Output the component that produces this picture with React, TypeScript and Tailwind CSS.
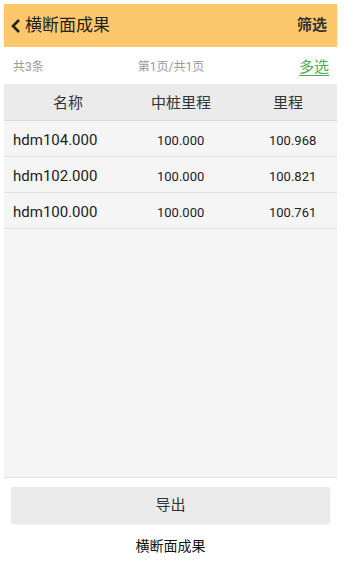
import React from 'react';

const rows = [
  { name: 'hdm104.000', center: '100.000', mileage: '100.968' },
  { name: 'hdm102.000', center: '100.000', mileage: '100.821' },
  { name: 'hdm100.000', center: '100.000', mileage: '100.761' }
];

const FONT = { fontFamily: 'Roboto, "Noto Sans CJK SC", sans-serif' };

export default function App() {
  return (
    <div className="h-[569px] w-[349px] overflow-hidden bg-white" style={FONT}>
      <div className="ml-[4px] mt-[4px] flex w-[333px] flex-col">
        {/* 顶部标题栏 */}
        <div className="flex h-[43px] items-center justify-between bg-[#fdc86c] pl-[6px] pr-[10px] shadow-[0_1px_2px_rgba(0,0,0,0.12)]">
          <div className="flex items-center gap-[3px]">
            <svg width="12" height="16" viewBox="0 0 12 16">
              <path d="M9 2 L3 8 L9 14" fill="none" stroke="#222" strokeWidth="2.6" />
            </svg>
            <span className="text-[17px] text-[#222]">横断面成果</span>
          </div>
          <span className="text-[15px] font-bold text-[#333]">筛选</span>
        </div>

        {/* 分页信息 */}
        <div className="flex h-[37px] items-center justify-between bg-white pl-[9px] pr-[8px] pt-[3px] text-[12px] text-[#9a9a9a]">
          <span className="w-[90px]">共3条</span>
          <span>第1页/共1页</span>
          <span className="w-[90px] text-right text-[15px] text-[#4caf50] underline underline-offset-[3px]">
            多选
          </span>
        </div>

        {/* 表格 */}
        <div className="flex h-[394px] flex-col border-b border-[#e2e2e2] bg-[#f5f5f5]">
          <div className="grid h-[37px] grid-cols-[128px_100px_105px] items-center border-b border-[#dcdcdc] bg-[#ebebeb] pt-[3px] text-[15px] text-[#333]">
            <span className="pl-[49px]">名称</span>
            <span className="pl-[19px]">中桩里程</span>
            <span className="pl-[41px]">里程</span>
          </div>
          {rows.map(r => (
            <div
              key={r.name}
              className="grid h-[36px] grid-cols-[128px_100px_105px] items-center border-b border-[#e0e0e0] pt-[3px] text-[#222]"
            >
              <span className="pl-[9px] text-[15px]">{r.name}</span>
              <span className="pl-[25px] pt-[2px] text-[13px]">{r.center}</span>
              <span className="pl-[37px] pt-[2px] text-[13px]">{r.mileage}</span>
            </div>
          ))}
        </div>

        {/* 导出按钮 */}
        <div className="px-[7px] pt-[9px]">
          <button className="flex h-[37px] w-full items-center justify-center rounded-[4px] bg-[#ebebeb] text-[15px] text-[#333] shadow-[0_0_1px_rgba(0,0,0,0.2)]">
            导出
          </button>
        </div>

        <div className="pt-[12px] text-center text-[14px] text-[#111]">横断面成果</div>
      </div>
    </div>
  );
}
